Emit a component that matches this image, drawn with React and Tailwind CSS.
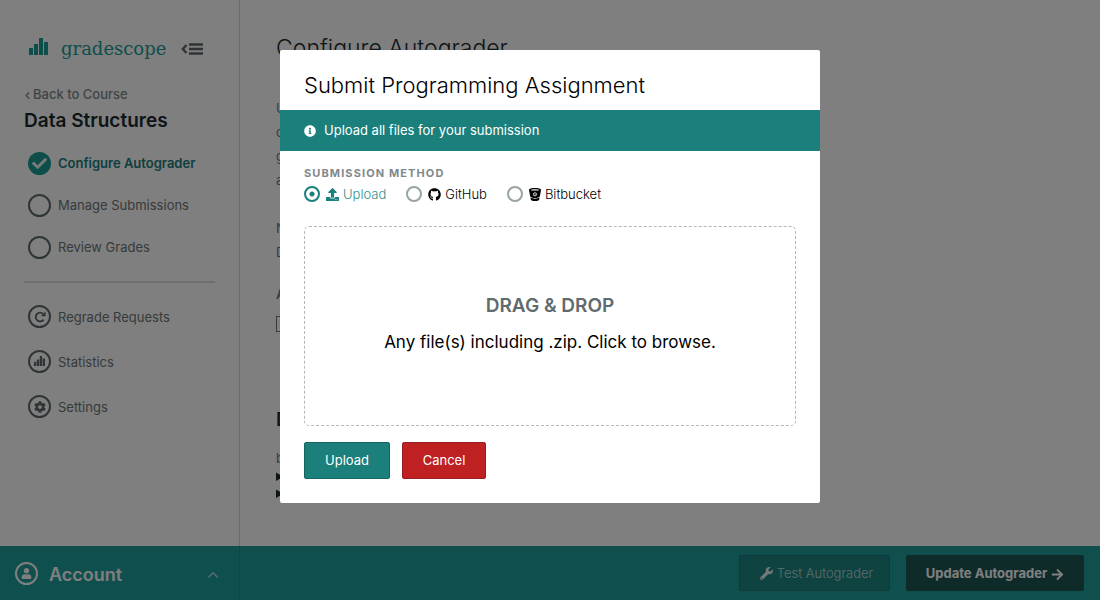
import React from "react";
import { FaCheck, FaCog, FaInfoCircle, FaUpload, FaGithub, FaWrench, FaArrowRight, FaUser } from "react-icons/fa";
import { ChevronLeft, ChevronUp } from "lucide-react";

function Bars({ className }) {
  return (
    <svg viewBox="0 0 19 17" className={className} fill="currentColor" aria-hidden="true">
      <path d="M0 10h4v7H0zM5 6h4v11H5zM10 0h4v17h-4zM15 4h4v13h-4z" />
    </svg>
  );
}

function CollapseIcon() {
  return (
    <svg viewBox="0 0 22 12" className="h-3 w-[22px]" fill="none" stroke="#5f6b6d" strokeWidth="2.4" aria-hidden="true">
      <path d="M5.5 2 1.800 6l3.700 4M8 1.500h14M8 6h14M8 10.500h14" />
    </svg>
  );
}

function RegradeIcon() {
  return (
    <svg viewBox="0 0 12 12" className="size-3" aria-hidden="true">
      <path d="M9.300 3A4.400 4.400 0 1 0 9.600 8.700" fill="none" stroke="currentColor" strokeWidth="1.900" />
      <path d="M11.600.5v4.700H6.900z" fill="currentColor" />
    </svg>
  );
}

function BitbucketIcon() {
  return (
    <svg viewBox="0 0 12 13" className="h-[13px] w-3 shrink-0" aria-hidden="true">
      <path fill="#000" d="M0 2C0 .6 2.700 0 6 0s6 .6 6 2l-1.100 6.200C10.500 9.300 8.600 10 6 10s-4.500-.7-4.900-1.800zM1.400 9.500c2.500 1.500 6.700 1.500 9.200 0l-.4 2C9.800 12.500 8.200 13 6 13s-3.800-.5-4.200-1.500z" />
      <ellipse cx="6" cy="1.900" rx="4.200" ry=".6" fill="#fff" />
      <circle cx="6" cy="6.300" r="1.600" fill="none" stroke="#fff" strokeWidth=".8" />
      <circle cx="6" cy="6.300" r=".5" fill="#fff" />
    </svg>
  );
}

function Ring({ children }) {
  return (
    <span className="flex size-[23px] shrink-0 items-center justify-center rounded-full border-2 border-[#5f6b6d] text-[#5f6b6d]">
      {children}
    </span>
  );
}

function NavItem({ icon, label, active, tall }) {
  return (
    <li className={tall ? "h-[45px]" : "h-[42px]"}>
      <a href="#" className={"flex h-full items-center gap-[7px] pl-1 " + (active ? "font-semibold text-[#1b7f7c]" : "text-[#6c7678]")}>
        {icon}
        <span className="pt-0.5">{label}</span>
      </a>
    </li>
  );
}

function Method({ label, icon, checked }) {
  return (
    <label className={"flex items-center gap-1 text-[13px] font-light leading-5 " + (checked ? "text-[#2f8f8a]" : "text-black")}>
      <input
        type="radio"
        name="method"
        defaultChecked={checked}
        className="mr-0.5 size-4 appearance-none rounded-full border-2 border-[#98a3a5] checked:border-[#1b807c] checked:bg-[radial-gradient(circle,#1b807c_2px,transparent_3px)]"
      />
      {icon}
      {label}
    </label>
  );
}

function Sidebar() {
  return (
    <aside className="w-60 shrink-0 border-r border-[#d9dddd] pl-6 pr-6 pt-7 text-[13px]">
      <div className="flex h-10 items-center pl-[5px]">
        <Bars className="-mt-1 h-[17px] w-[19px] text-[#1b9c97]" />
        <span className="ml-[13px] font-['DejaVu_Serif',serif] text-[18px] font-light text-[#1b9c97]">gradescope</span>
        <button type="button" aria-label="Collapse sidebar" className="ml-[15px] pt-0.5">
          <CollapseIcon />
        </button>
      </div>
      <a href="#" className="mt-[17px] flex h-5 items-center font-medium text-[#7f898b]">
        <ChevronLeft size={11} strokeWidth={3} className="-ml-0.5" />
        Back to Course
      </a>
      <h2 className="text-[19px] font-semibold leading-8 text-[#1c2b2d]">Data Structures</h2>
      <nav>
        <ul className="mt-[5px]">
          <NavItem
            active
            label="Configure Autograder"
            icon={
              <span className="flex size-[23px] shrink-0 items-center justify-center rounded-full bg-[#1b9c97] text-[#f4f4f4]">
                <FaCheck size={15} />
              </span>
            }
          />
          <NavItem label="Manage Submissions" icon={<Ring />} />
          <NavItem label="Review Grades" icon={<Ring />} />
        </ul>
        <hr className="mt-[13px] border-t-2 border-[#dcdfdf]" />
        <ul className="mt-[11px]">
          <NavItem tall label="Regrade Requests" icon={<Ring><RegradeIcon /></Ring>} />
          <NavItem tall label="Statistics" icon={<Ring><Bars className="mb-0.5 h-2.5 w-[11px]" /></Ring>} />
          <NavItem tall label="Settings" icon={<Ring><FaCog size={12} /></Ring>} />
        </ul>
      </nav>
    </aside>
  );
}

function Content() {
  return (
    <main className="min-w-0 flex-1 pl-9 pt-7 text-[13px] text-[#6c7678]">
      <h1 className="text-[23px] font-light leading-10 text-[#1c2b2d]">Configure Autograder</h1>
      <p className="mt-7 leading-6">
        Upload<br />
        code<br />
        guide<br />
        archive
      </p>
      <p className="mt-6 leading-6">
        Note<br />
        Docs
      </p>
      <h3 className="mt-5 font-semibold leading-5">Autograder</h3>
      <div className="mt-3 h-4 w-3 border border-[#6c7678]" />
      <h2 className="mt-[76px] text-[19px] font-semibold leading-6 text-[#1c2b2d]">Docker</h2>
      <p className="mt-4 leading-5">built</p>
      <details className="leading-[17px] text-[#1c2b2d]"><summary>Output</summary></details>
      <details className="leading-[17px] text-[#1c2b2d]"><summary>Errors</summary></details>
    </main>
  );
}

function Footer() {
  return (
    <footer className="flex h-[54px] shrink-0 bg-[#1ea09d] text-white">
      <button type="button" className="flex w-60 items-center border-r border-[#1b9390] pl-[15px] pr-[17px]">
        <span className="flex size-[23px] items-center justify-center rounded-full border-2 border-white">
          <FaUser size={11} />
        </span>
        <span className="ml-[11px] pt-0.5 text-[18px] font-semibold">Account</span>
        <ChevronUp size={18} strokeWidth={1.5} className="ml-auto mt-1 text-white/70" />
      </button>
      <div className="flex flex-1 items-center justify-end gap-4 pr-4 text-[13px]">
        <button type="button" className="flex h-9 w-[151px] items-center justify-center gap-1 rounded-[2px] border border-[#197773] bg-[#1e8683] pl-1 font-light text-white/70">
          <FaWrench size={13} className="text-white/90" />
          <span className="pt-0.5">Test Autograder</span>
        </button>
        <button type="button" className="flex h-9 w-[178px] items-center justify-center gap-1 rounded-[2px] bg-[#1d5754] font-bold">
          <span className="pt-0.5">Update Autograder</span>
          <FaArrowRight size={13} className="mt-0.5" />
        </button>
      </div>
    </footer>
  );
}

function SubmitDialog() {
  return (
    <div className="fixed inset-0 flex items-start justify-center bg-black/50 pt-[50px]">
      <form role="dialog" aria-labelledby="dialog-title" className="w-full max-w-[540px] rounded-[2px] bg-white pb-6 text-black">
        <h2 id="dialog-title" className="px-6 pb-[5px] pt-[15px] text-[22px] font-light leading-10">Submit Programming Assignment</h2>
        <p className="flex h-[41px] items-center gap-2 bg-[#1b807c] px-6 text-[13px] text-white">
          <FaInfoCircle size={12} />
          Upload all files for your submission
        </p>
        <div className="px-6 pt-3">
          <fieldset>
            <legend className="text-[11px] font-bold leading-[21px] tracking-widest text-[#7f898b]">SUBMISSION METHOD</legend>
            <div className="flex gap-5">
              <Method checked label="Upload" icon={<FaUpload size={13} className="text-[#1b807c]" />} />
              <Method label="GitHub" icon={<FaGithub size={13} className="text-black" />} />
              <Method label="Bitbucket" icon={<BitbucketIcon />} />
            </div>
          </fieldset>
          <button type="button" className="mt-[22px] flex h-[200px] w-full flex-col items-center justify-center rounded-[5px] border border-dashed border-[#b3b8b8] pb-1">
            <span className="text-[19px] font-semibold leading-9 text-[#5f6b6d]">DRAG &amp; DROP</span>
            <span className="text-[17px] leading-9">Any file(s) including .zip. Click to browse.</span>
          </button>
          <div className="mt-4 flex gap-3 text-[13px] text-white">
            <button type="button" className="h-[37px] w-[86px] rounded-[2px] border border-[#17655f] bg-[#1b807c]">Upload</button>
            <button type="button" className="h-[37px] w-[84px] rounded-[2px] border border-[#971f22] bg-[#bf2021]">Cancel</button>
          </div>
        </div>
      </form>
    </div>
  );
}

export default function App() {
  return (
    <div className="flex h-screen flex-col overflow-hidden bg-white font-[Inter,sans-serif]">
      <div className="flex min-h-0 flex-1 overflow-hidden">
        <Sidebar />
        <Content />
      </div>
      <Footer />
      <SubmitDialog />
    </div>
  );
}
